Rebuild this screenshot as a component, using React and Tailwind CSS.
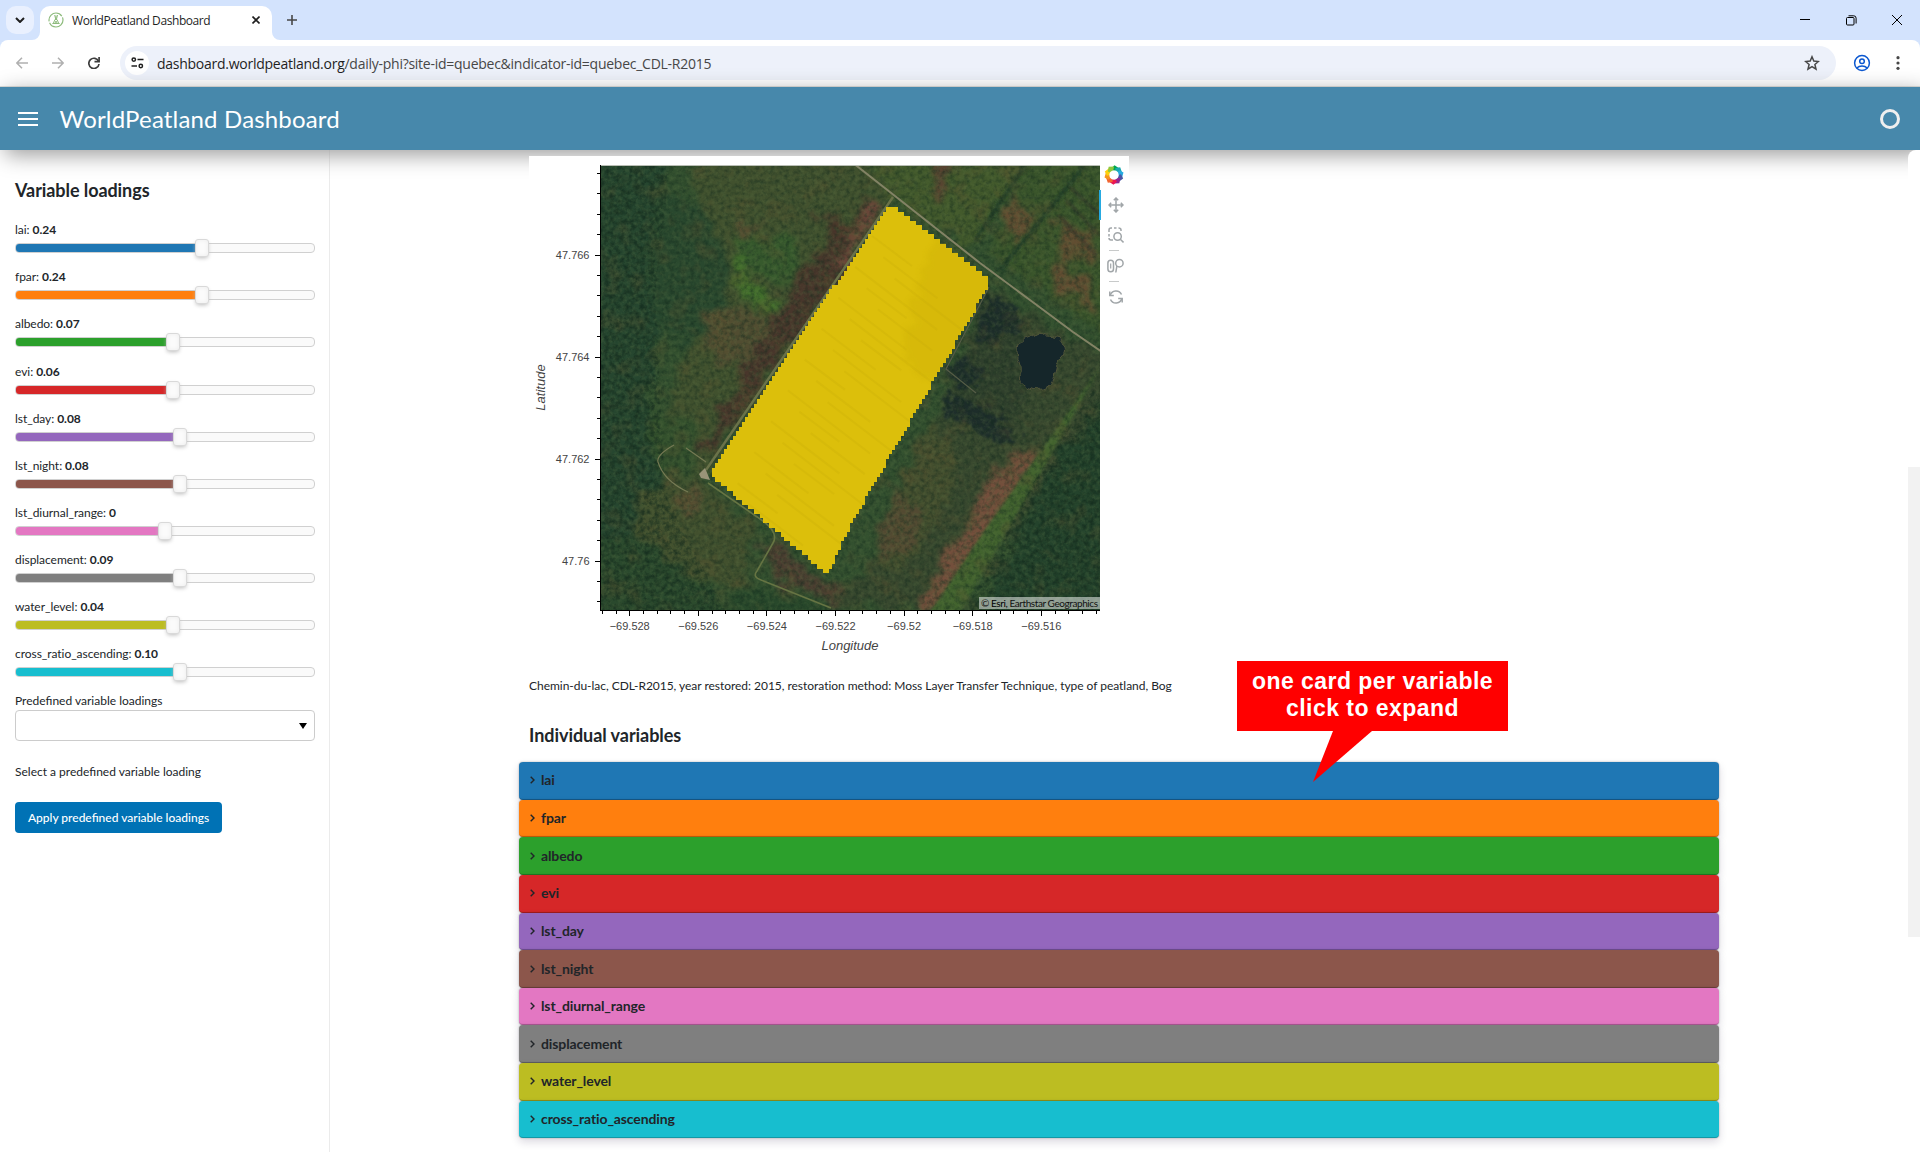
import React from "react";

const VARIABLES = [
  { name: "lai", value: "0.24", color: "#1f77b4", pos: 187 },
  { name: "fpar", value: "0.24", color: "#ff7f0e", pos: 187 },
  { name: "albedo", value: "0.07", color: "#2ca02c", pos: 157.5 },
  { name: "evi", value: "0.06", color: "#d62728", pos: 157.5 },
  { name: "lst_day", value: "0.08", color: "#9467bd", pos: 165 },
  { name: "lst_night", value: "0.08", color: "#8c564b", pos: 165 },
  { name: "lst_diurnal_range", value: "0", color: "#e377c2", pos: 150 },
  { name: "displacement", value: "0.09", color: "#7f7f7f", pos: 165 },
  { name: "water_level", value: "0.04", color: "#bcbd22", pos: 157.5 },
  { name: "cross_ratio_ascending", value: "0.10", color: "#17becf", pos: 165 },
];

function TabStrip() {
  return (
    <div className="flex h-10 shrink-0 bg-[#d3e3fd] pl-1.5">
      <div className="mt-1.5 flex h-7 w-7 items-center justify-center rounded-[10px] bg-[#e9f0fe]">
        <svg width="10" height="6" viewBox="0 0 10 6" fill="none" stroke="#1f1f1f" strokeWidth="2">
          <path d="M1 1l4 4 4-4" />
        </svg>
      </div>
      <svg className="-ml-0.5 mt-8 shrink-0" width="8" height="8" viewBox="0 0 8 8">
        <path d="M8 0v8H0a8 8 0 0 0 8-8z" fill="#fff" />
      </svg>
      <div className="mt-1.5 flex h-[34px] w-[232px] items-center rounded-t-[10px] bg-white pb-1.5 pl-2">
        <svg width="16" height="16" viewBox="0 0 16 16" fill="none" stroke="#8dbb7c">
          <circle cx="8" cy="8" r="7" strokeWidth="1.2" strokeDasharray="19 1.5" />
          <path d="M8 3.5v4M6.7 3l1 4M9.5 3l-1 4M5 12l2-4.5h2l2 4.5M6.5 12l1.5-3 1.5 3M4.5 11.5h7" strokeWidth="1" />
        </svg>
        <span className="ml-2 whitespace-nowrap pt-px font-['Open_Sans',sans-serif] text-[12px] tracking-[-0.42px] text-[#1f1f1f]">
          WorldPeatland Dashboard
        </span>
        <svg className="ml-auto mr-3" width="8" height="8" viewBox="0 0 8 8" stroke="#1f1f1f" strokeWidth="1.6">
          <path d="M.5.5l7 7M7.5.5l-7 7" />
        </svg>
      </div>
      <svg className="mt-8 shrink-0" width="8" height="8" viewBox="0 0 8 8">
        <path d="M0 0v8h8a8 8 0 0 1-8-8z" fill="#fff" />
      </svg>
      <svg className="ml-[7px] mt-[15px]" width="10" height="10" viewBox="0 0 10 10" stroke="#474747" strokeWidth="1.6">
        <path d="M5 0v10M0 5h10" />
      </svg>
      <div className="ml-auto flex h-10 items-center pr-[18px]">
        <svg width="10" height="10" viewBox="0 0 10 10" stroke="#000">
          <path d="M0 4.5h10" />
        </svg>
        <svg className="ml-9" width="11" height="11" viewBox="0 0 11 11" fill="none" stroke="#000">
          <rect x=".5" y="2.5" width="7.5" height="7.5" rx="1" />
          <path d="M2.5.8h5.2a2.4 2.4 0 0 1 2.4 2.4v5.3" />
        </svg>
        <svg className="ml-[35px]" width="10" height="10" viewBox="0 0 10 10" stroke="#000">
          <path d="M0 0l10 10M10 0L0 10" />
        </svg>
      </div>
    </div>
  );
}

function AddressBar() {
  return (
    <div className="bg-[#d3e3fd]">
      <div className="flex h-[46px] items-center rounded-t-lg bg-white pl-4">
        <svg width="12" height="12" viewBox="0 0 12 12" fill="none" stroke="#b0b0b0" strokeWidth="1.5">
          <path d="M12 6H1M6 .8L.9 6 6 11.2" />
        </svg>
        <svg className="ml-6" width="12" height="12" viewBox="0 0 12 12" fill="none" stroke="#b0b0b0" strokeWidth="1.5">
          <path d="M0 6h11M6 .8L11.1 6 6 11.2" />
        </svg>
        <svg className="ml-6" width="12" height="12" viewBox="0 0 12 12" fill="none" stroke="#3c3c3c" strokeWidth="1.7">
          <path d="M10.6 4.3A5.1 5.1 0 1 0 11 7" />
          <path d="M11.1 0v4.6H6.5" />
        </svg>
        <div className="ml-5 flex h-[34px] w-[1716px] items-center rounded-full bg-[#edf1fa] pl-[5px]">
          <div className="flex h-6 w-6 items-center justify-center rounded-full bg-white">
            <svg width="13" height="12" viewBox="0 0 13 12" fill="none" stroke="#1f1f1f" strokeWidth="1.5">
              <circle cx="2.8" cy="2.6" r="1.7" />
              <path d="M6.5 2.6h6M.5 9h5.5" />
              <circle cx="9.8" cy="9" r="1.7" />
            </svg>
          </div>
          <span className="ml-2 whitespace-nowrap font-['Open_Sans',sans-serif] text-[14px] tracking-[-0.26px] text-[#1f1f1f]">
            dashboard.worldpeatland.org<span className="text-[#474747]">/daily-phi?site-id=quebec&amp;indicator-id=quebec_CDL-R2015</span>
          </span>
          <svg className="ml-auto mr-4" width="16" height="16" viewBox="0 0 16 16" fill="none" stroke="#474747" strokeWidth="1.5">
            <path d="M8 1.8l1.8 4.3 4.6.4-3.5 3 1.1 4.6L8 11.6l-4 2.5 1.1-4.6-3.5-3 4.6-.4z" />
          </svg>
        </div>
        <svg className="ml-[17px]" width="18" height="18" viewBox="0 0 18 18" fill="none" stroke="#0b57d0" strokeWidth="1.5">
          <circle cx="9" cy="9" r="7.4" />
          <circle cx="9" cy="7.2" r="2.3" />
          <path d="M3.8 14c2.7-2.7 7.7-2.7 10.4 0" />
        </svg>
        <svg className="ml-[25px]" width="4" height="14" viewBox="0 0 4 14" fill="#474747">
          <circle cx="2" cy="1.7" r="1.6" />
          <circle cx="2" cy="7" r="1.6" />
          <circle cx="2" cy="12.3" r="1.6" />
        </svg>
      </div>
      <div className="h-px bg-[#dbdcd9]" />
    </div>
  );
}

function Header() {
  return (
    <header className="relative z-10 flex h-[63px] shrink-0 items-center bg-[#4788ab] pl-[18px] pr-5 shadow-[5px_5px_20px_#9c9c9c]">
      <svg width="20" height="14" viewBox="0 0 20 14" stroke="#fff" strokeWidth="2">
        <path d="M0 1h20M0 7h20M0 13h20" />
      </svg>
      <h1 className="ml-[21.5px] whitespace-nowrap text-[24px] leading-8 tracking-[0.17px] text-white">WorldPeatland Dashboard</h1>
      <div className="ml-auto h-5 w-5 rounded-full border-[3px] border-[#efefef]" />
    </header>
  );
}

function Slider({ variable }) {
  return (
    <div className="h-[47.1px]">
      <div className="h-[21px] whitespace-nowrap text-[12px] leading-[17px] tracking-[-0.05px]">
        {variable.name}: <b>{variable.value}</b>
      </div>
      <div className="relative mt-[1px] h-[10px] w-[300px] rounded-[4px] border border-[#d0d0d0] bg-[#fafafa]">
        <div
          className="h-full rounded-l-[3px]"
          style={{ width: variable.pos, backgroundColor: variable.color }}
        />
        <div
          className="absolute -top-[5px] h-[18px] w-[14px] rounded-[3px] border border-[#d9d9d9] bg-[#fbfbfb] shadow-[inset_0_0_4px_#ececec,0_2px_4px_-1px_#bbb]"
          style={{ left: variable.pos - 8 }}
        />
      </div>
    </div>
  );
}

function Sidebar() {
  return (
    <aside className="w-[330px] shrink-0 border-r border-[#ebebeb] pl-[15px] pt-[26px]">
      <h2 className="text-[18px] font-bold leading-7 tracking-[-0.07px]">Variable loadings</h2>
      <div className="mt-[17.25px]">
        {VARIABLES.map((v) => (
          <Slider key={v.name} variable={v} />
        ))}
      </div>
      <div className="text-[12px] leading-[18px]">Predefined variable loadings</div>
      <div className="flex h-[31px] w-[300px] items-center justify-end rounded border border-[#ccc] bg-white pr-[7px]">
        <svg width="8" height="6" viewBox="0 0 8 6">
          <path d="M0 0h8L4 6z" />
        </svg>
      </div>
      <div className="mt-[22px] text-[12px] leading-[18px]">Select a predefined variable loading</div>
      <button className="mt-[21px] flex h-[31px] w-[207px] items-center justify-center whitespace-nowrap rounded-[4px] bg-[#0072b5] pt-px text-[12px] font-medium text-white">
        Apply predefined variable loadings
      </button>
    </aside>
  );
}

/* Interpolates x at a given y along a polyline. */
function lerp(points, y) {
  for (let i = 0; i < points.length - 1; i++) {
    const [x0, y0] = points[i];
    const [x1, y1] = points[i + 1];
    if (y >= y0 && y <= y1) return x0 + ((x1 - x0) * (y - y0)) / (y1 - y0);
  }
  return points[points.length - 1][0];
}

/* Field outline, snapped to the 3 x 4.575 px cells of the raster. */
function fieldPath() {
  const left = [[888, 205], [711.5, 469], [713, 477], [826, 574]];
  const right = [[893, 205], [987.7, 277], [987.7, 287], [868, 494], [850, 527], [834, 560], [827, 574]];
  const h = 4.575;
  const snap = (x) => Math.round((x - 0.67) / 3) * 3 + 0.67;
  let d = "";
  for (let i = 0; i < 80; i++) {
    const y = 207 + i * h;
    const a = snap(lerp(left, y + h / 2));
    const b = Math.max(snap(lerp(right, y + h / 2)), a + 3);
    d += `M${a} ${y}H${b}V${y + h + 0.3}H${a}z`;
  }
  return d;
}

function Imagery() {
  return (
    <g clipPath="url(#frame)">
      <rect x="600" y="165" width="500" height="445" fill="#33502f" />
      <g filter="url(#soft)">
        <path d="M585 150h90l-30 75 15 80-10 90 15 100-30 130h-50z" fill="#26462f" />
        <path d="M695 150h170l30 50-130 190-60 80-30 10-12-70 30-60-8-60 25-60-20-40z" fill="#41512e" />
        <path d="M650 190l60 20 20 60-10 60-50 10-25-60z" fill="#29482e" />
        <path d="M650 420l40-10 10 40-30 30-25-20z" fill="#34512d" />
        <path d="M640 490l60-15 60 60-20 50-60-5-45-40z" fill="#42502e" />
        <path d="M665 495l30-8 15 20-25 12zM740 215l20 10 3 30-12 15-12-35z" fill="#564e32" />
        <path d="M700 315l45-12 25 20-15 35-40 10z" fill="#514d31" />
        <path d="M735 240l50-10 20 20-25 35-40-20z" fill="#375a2d" />
        <path d="M735 245l14 30 28 27-5 14-35-32zM733 280l40 20-5 10-35-20z" fill="#43702c" />
        <path d="M870 150h160l-60 105-80-60z" fill="#435a2c" />
        <path d="M928 160h25l-8 45-18-10z" fill="#574130" />
        <path d="M1030 150h85v195l-125-95z" fill="#3a552b" />
        <path d="M1010 195l20 15-12 35-16-10zM1055 215l35 18 5 25-28 3zM1050 265l45 10-5 30-35-18z" fill="#614d31" />
        <path d="M865 200l10 10-20 45-25 45-45 45-30 50-45 60-10-5 45-80 38-65 6-32 26-10z" fill="#48362b" />
        <path d="M812 205l20 18 28-5-8 20-25-3z" fill="#48342a" />
        <path d="M870 198l9 10-35 67-12-8z" fill="#6b4639" />
        <path d="M985 285l130 80-10 60-105 110-60 75-110-5 60-60z" fill="#37472e" />
        <path d="M985 290l45 35-5 70-15 40-60-30z" fill="#2f3f2c" />
        <path d="M925 420l35 40-30 80-40 30-20-10z" fill="#444e2e" />
        <path d="M890 490l40 20-28 45-28 5z" fill="#534a32" />
        <path d="M1020 450l14 8-30 55-40 60-25 40h-28l30-52 25-30 20-50z" fill="#744f3c" />
        <path d="M1115 380v240h-145l65-130z" fill="#24432c" />
        <path d="M765 540l60 40 20 25-80-30z" fill="#4c3e31" />
        <path d="M590 530l70 20 70 75h-140z" fill="#2a492d" />
        <path d="M730 580l70 15 60 30H720z" fill="#28482b" />
      </g>
      <path d="M1101 366L1040 474 960 612h-30l60-90z" fill="#42642f" filter="url(#soft1)" />
      <path d="M975 240l50-75M1000 270l85-105" stroke="#203c26" strokeWidth="4" filter="url(#soft1)" />
      <path d="M1066 200l34 36M1070 187l30 28M1058 215l38 40" stroke="#2e2f26" strokeWidth="2.5" opacity=".8" filter="url(#soft1)" />
      <path
        d="M987 292l26 16 16 16-12 8-16 4-14 8-10-4zM950 355l24 10 8 18-16 8-16-14zM938 395l32 6 18 8 12 14 20 10-14 14-22-10-22-16-20-10z"
        fill="#17272a"
        opacity=".75"
        filter="url(#torn)"
      />
      <rect x="600" y="165" width="500" height="445" filter="url(#mottle)" opacity=".4" />
      <rect x="600" y="165" width="500" height="445" filter="url(#grain)" opacity=".5" />
      <rect x="600" y="165" width="500" height="445" filter="url(#glint)" opacity=".4" />
      <g filter="url(#grain)" opacity=".45">
        <path d="M600 165h70l-15 130 10 200 60 115H600zM1100 380v230H965l70-130z" />
      </g>
      <path
        d="M1030 337q9-6 17-2 10-1 15 8 6 10-2 16-5 8-5 14-1 9-8 14-9 5-17 1-11-3-11-12 4-7 1-14-5-9-2-18 4-5 12-7z"
        fill="#15262a"
        stroke="#4f5339"
        strokeWidth="1"
        filter="url(#ragged)"
      />
      <g fill="none" filter="url(#soft0)">
        <path d="M853 163l42 33 85 67 54 40 39 29 29 20" stroke="#838365" strokeWidth="2" />
        <path d="M893 197L706 470" stroke="#6b7249" strokeWidth="2.4" />
        <path d="M708 483l55 38q16 12 10 22l-16 28q-5 6 4 9l70 28" stroke="#667443" strokeWidth="1.6" />
        <path d="M674 445q-18 10-16 17 6 19 30 30M686 448l20 14" stroke="#767a54" strokeWidth="1.1" />
        <path d="M989 287l-43 82 30 24" stroke="#555c46" strokeWidth="1.2" />
      </g>
      <path d="M699 474l6-6 5 12-9-2z" fill="#999478" filter="url(#soft0)" />
    </g>
  );
}

function Chart() {
  const stripes = Array.from({ length: 26 }, (_, i) => i);
  return (
    <svg className="shrink-0" width="570" height="506" viewBox="530 156 570 506">
      <defs>
        <clipPath id="frame">
          <rect x="600" y="165" width="500" height="445" />
        </clipPath>
        <clipPath id="field">
          <path d={fieldPath()} />
        </clipPath>
        <filter id="soft" x="-5%" y="-5%" width="110%" height="110%" colorInterpolationFilters="sRGB">
          <feTurbulence type="fractalNoise" baseFrequency=".05" numOctaves="4" seed="4" result="n" />
          <feDisplacementMap in="SourceGraphic" in2="n" scale="34" xChannelSelector="R" yChannelSelector="G" />
          <feGaussianBlur stdDeviation="2.4" />
        </filter>
        <filter id="ragged" colorInterpolationFilters="sRGB">
          <feTurbulence type="fractalNoise" baseFrequency=".12" numOctaves="2" seed="2" result="n" />
          <feDisplacementMap in="SourceGraphic" in2="n" scale="7" xChannelSelector="R" yChannelSelector="G" />
          <feGaussianBlur stdDeviation=".5" />
        </filter>
        <filter id="torn" x="-20%" y="-20%" width="140%" height="140%" colorInterpolationFilters="sRGB">
          <feTurbulence type="fractalNoise" baseFrequency=".09" numOctaves="3" seed="5" result="n" />
          <feDisplacementMap in="SourceGraphic" in2="n" scale="32" xChannelSelector="R" yChannelSelector="G" />
          <feGaussianBlur stdDeviation="1.2" />
        </filter>
        <filter id="soft1">
          <feGaussianBlur stdDeviation="1.5" />
        </filter>
        <filter id="soft0">
          <feGaussianBlur stdDeviation=".5" />
        </filter>
        <filter id="mottle" x="0" y="0" width="100%" height="100%" colorInterpolationFilters="sRGB">
          <feTurbulence type="fractalNoise" baseFrequency=".045" numOctaves="3" seed="21" />
          <feColorMatrix values="0 0 0 0 .36  0 0 0 0 .32  0 0 0 0 .19  0 3 0 0 -1.5" />
        </filter>
        <filter id="grain" x="0" y="0" width="100%" height="100%" colorInterpolationFilters="sRGB">
          <feTurbulence type="fractalNoise" baseFrequency=".2" numOctaves="3" seed="8" result="n" />
          <feColorMatrix in="n" values="0 0 0 0 .07  0 0 0 0 .16  0 0 0 0 .11  2.2 0 0 0 -.86" />
          <feComposite operator="in" in2="SourceAlpha" />
        </filter>
        <filter id="glint" x="0" y="0" width="100%" height="100%" colorInterpolationFilters="sRGB">
          <feTurbulence type="fractalNoise" baseFrequency=".22" numOctaves="3" seed="31" />
          <feColorMatrix values="0 0 0 0 .38  0 0 0 0 .47  0 0 0 0 .28  0 1.5 0 0 -.6" />
        </filter>
      </defs>
      <Imagery />
      <path d={fieldPath()} fill="#dcbf0b" shapeRendering="crispEdges" />
      <g clipPath="url(#field)">
        <path d="M935 225l70 40-60 140-40-50z" fill="#cdb006" opacity=".35" filter="url(#soft)" />
        <g stroke="#c4a808" strokeWidth="2" opacity=".22" filter="url(#soft0)">
          {stripes.map((i) => (
            <path key={i} d={`M${872 - i * 5.6 + (i % 3) * 17} ${236 + i * 10.3 + (i % 3) * 11}l${40 + (i % 4) * 14} ${30 + (i % 4) * 11}`} />
          ))}
        </g>
      </g>
      <path d="M600 165.5h500" stroke="#b9beb5" />
      <rect x="979" y="597" width="121" height="12" fill="#fff" fillOpacity=".5" />
      <text x="981" y="606.5" fontSize="10" fill="#111" fontFamily="Lato, sans-serif" textLength="117">
        © <tspan fill="#000">Esri</tspan>, Earthstar Geographics
      </text>
      <g stroke="#000" shapeRendering="crispEdges">
        <path d="M600.5 165v446M600 610.5h500" />
        {Array.from({ length: 22 }, (_, k) => (
          <path key={k} d={`M${k % 5 === 4 ? 595 : 597} ${Math.floor(173.4 + 20.4 * k) + 0.5}H600`} />
        ))}
        {Array.from({ length: 37 }, (_, k) => (
          <path key={k} d={`M${Math.floor(602.3 + 13.72 * k) + 0.5} 611V${k % 5 === 2 ? 616 : 614}`} />
        ))}
      </g>
      <g fontFamily="'Liberation Sans', Arial, sans-serif" fontSize="11" fill="#444">
        {["47.766", "47.764", "47.762", "47.76"].map((t, i) => (
          <text key={t} x="589.5" y={259.3 + i * 102} textAnchor="end">
            {t}
          </text>
        ))}
        {["528", "526", "524", "522", "52", "518", "516"].map((t, i) => (
          <text key={t} x={629.7 + i * 68.6} y="630" textAnchor="middle">
            −69.{t}
          </text>
        ))}
        <g fontSize="13" fontStyle="italic" textAnchor="middle">
          <text x="850" y="650">
            Longitude
          </text>
          <text transform="translate(545 387.5) rotate(-90)">Latitude</text>
        </g>
      </g>
    </svg>
  );
}

function BokehLogo() {
  const colors = ["#00a650", "#19a8b0", "#26aae1", "#4a56a5", "#92278f", "#ed1651", "#f26531", "#f7941d", "#fdd10a", "#8dc73f"];
  return (
    <svg className="-ml-px" width="20" height="20" viewBox="-10 -10 20 20">
      {colors.map((c, i) => (
        <path key={c} d="M-3-6.5L.5-9.8 5-6.8 2.4-4.4-1.8-4.8z" fill={c} transform={`rotate(${i * 36})`} />
      ))}
    </svg>
  );
}

function PlotTools() {
  const icon = { width: 16, height: 16, viewBox: "0 0 16 16", fill: "none", stroke: "#a1a6a9", strokeWidth: 1.5 };
  return (
    <div className="-ml-px flex w-[30px] flex-col items-center pt-[9px]">
      <BokehLogo />
      <div className="mt-[5px] flex h-[30px] w-full items-center border-l-2 border-[#26aae1] pl-[6.5px]">
        <svg {...icon}>
          <path d="M8 1.2v13.6M1.2 8h13.6M5.8 3.2L8 1l2.2 2.2M5.8 12.8L8 15l2.2-2.2M3.2 5.8L1 8l2.2 2.2M12.8 5.8L15 8l-2.2 2.2" />
        </svg>
      </div>
      <div className="flex h-[30px] w-full items-center pl-[8.5px]">
        <svg {...icon}>
          <path d="M1 5V3q0-2 2-2h1M6 1h2.5M10.5 1q2.5 0 2.5 2v1M1 7v2.5M1 11q0 2 2 2h2" />
          <circle cx="9.6" cy="9.5" r="3.7" />
          <path d="M12.3 12.2L15.5 15.4" />
        </svg>
      </div>
      <div className="h-px w-[10px] bg-[#c8caca]" />
      <div className="flex h-[30px] w-full items-center pl-2">
        <svg {...icon} width="17" viewBox="0 0 17 16">
          <rect x=".9" y="2.2" width="5.6" height="11.6" rx="2.8" />
          <path d="M3.7 5.5v5" strokeWidth="1.2" />
          <circle cx="12.4" cy="5.2" r="3.7" />
          <path d="M9.9 7.8L8.8 14.5" />
        </svg>
      </div>
      <div className="h-px w-[10px] bg-[#c8caca]" />
      <div className="flex h-[30px] w-full items-center pl-[8.5px]">
        <svg {...icon}>
          <path d="M2.2 6.5A6 6 0 0 1 13.5 5.5M13.8 9.5A6 6 0 0 1 2.5 10.5" />
          <path d="M1.8 2.5v4h4M14.2 13.5v-4h-4" />
        </svg>
      </div>
    </div>
  );
}

function Callout() {
  return (
    <div className="absolute -top-[101px] left-[718px] z-20 h-[121px] w-[271px]">
      <div className="flex h-[70px] flex-col items-center justify-center whitespace-nowrap bg-[#f00] pb-[2px] font-['Liberation_Sans',Arial,sans-serif] text-[23px] font-bold leading-[27px] tracking-[0.46px] text-white">
        <span>one card per variable</span>
        <span>click to expand</span>
      </div>
      <svg className="block" width="271" height="51" viewBox="0 0 271 51">
        <path d="M96 0h39L76 51z" fill="#f00" />
      </svg>
    </div>
  );
}

function VariableCards() {
  return (
    <div className="relative mt-[13px] w-[1200px]">
      {VARIABLES.map((v) => (
        <div
          key={v.name}
          className="flex h-[37.65px] items-center rounded-[4px] border-b border-black/20 pl-[10.5px] shadow-[0_0_2px_rgba(0,0,0,0.3),0_4px_9px_rgba(30,20,60,0.16)]"
          style={{ backgroundColor: v.color }}
        >
          <svg width="5" height="8" viewBox="0 0 5 8" fill="none" stroke="#212529" strokeWidth="1.4">
            <path d="M.7.7L4 4 .7 7.3" />
          </svg>
          <span className="ml-[6.5px] text-[14px] font-bold leading-5 tracking-[-0.11px]">{v.name}</span>
        </div>
      ))}
      <Callout />
    </div>
  );
}

export default function App() {
  return (
    <div className="flex h-[1152px] w-[1920px] flex-col overflow-hidden bg-white font-[Lato,sans-serif] text-[#212529]">
      <TabStrip />
      <AddressBar />
      <Header />
      <div className="flex min-h-0 flex-1">
        <Sidebar />
        <main className="flex flex-1 flex-col pl-[189px] pt-[6px]">
          <div className="relative z-20 ml-[10px] flex w-[600px] bg-white pl-px">
            <Chart />
            <PlotTools />
          </div>
          <p className="ml-[10px] mt-[15px] whitespace-nowrap text-[12px] leading-[18px] tracking-[-0.033px]">
            Chemin-du-lac, CDL-R2015, year restored: 2015, restoration method: Moss Layer Transfer Technique, type of peatland, Bog
          </p>
          <h2 className="ml-[10px] mt-[26px] text-[18px] font-bold leading-7 tracking-[-0.05px]">Individual variables</h2>
          <VariableCards />
        </main>
        <div className="relative z-20 w-3 rounded-tl-lg bg-white pt-[317px]">
          <div className="h-[470px] bg-[#f2f2f2]" />
        </div>
      </div>
    </div>
  );
}
